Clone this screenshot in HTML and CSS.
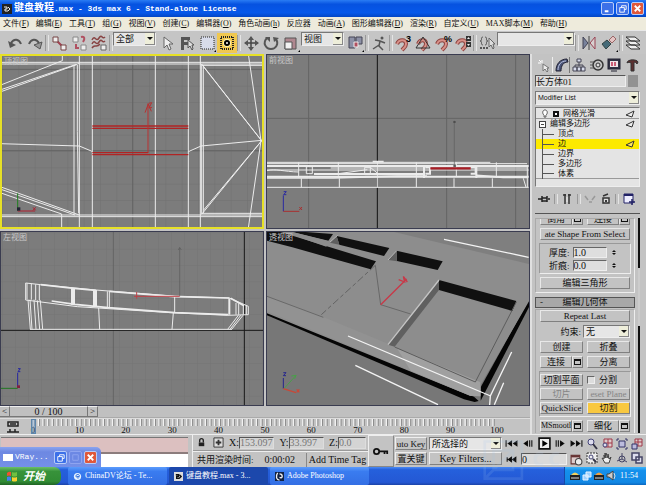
FILE: index.html
```html
<!DOCTYPE html>
<html lang="zh-CN">
<head>
  <meta charset="UTF-8" />
  <title>键盘教程.max - 3ds max 6 - Stand-alone License</title>
  <link rel="stylesheet" href="styles.css">
</head>
<body>

  <!-- Title bar -->
  <header class="title-bar">
    <svg class="app-icon" viewBox="0 0 10 10"><rect width="10" height="10" fill="#222"/><path d="M2 3h3v2H3v2h3M6 3l2 2-2 2" fill="none" stroke="#eee"/></svg>
    <h1><span>键盘教程</span>.max - 3ds max 6 - Stand-alone License</h1>
    <div class="window-buttons">
      <button aria-label="最小化"><svg viewBox="0 0 12 12"><path d="M3 9h4" stroke="#fff" stroke-width="2"/></svg></button>
      <button aria-label="还原"><svg viewBox="0 0 12 12"><path d="M5 5V3h5v4H8M3 5h5v5H3z" fill="none" stroke="#fff"/></svg></button>
      <button class="close" aria-label="关闭"><svg viewBox="0 0 12 12"><path d="M3 3l6 6M9 3l-6 6" stroke="#fff" stroke-width="2"/></svg></button>
    </div>
  </header>

  <!-- Menu -->
  <nav class="menu-bar">
    <a href="#">文件(<u>F</u>)</a>
    <a href="#">编辑(<u>E</u>)</a>
    <a href="#">工具(<u>T</u>)</a>
    <a href="#">组(<u>G</u>)</a>
    <a href="#">视图(<u>V</u>)</a>
    <a href="#">创建(<u>C</u>)</a>
    <a href="#">编辑器(<u>O</u>)</a>
    <a href="#">角色动画(<u>h</u>)</a>
    <a href="#">反应器</a>
    <a href="#">动画(<u>A</u>)</a>
    <a href="#">图形编辑器(<u>D</u>)</a>
    <a href="#">渲染(<u>R</u>)</a>
    <a href="#">自定义(<u>U</u>)</a>
    <a href="#">MAX脚本(<u>M</u>)</a>
    <a href="#">帮助(<u>H</u>)</a>
  </nav>

  <!-- Main toolbar -->
  <div class="toolbar">
    <button aria-label="撤消"><svg viewBox="0 0 20 20"><path d="M6 10C9 5 14 6 16 11" fill="none" stroke="#555" stroke-width="2"/><path d="M3 8l2 7 6-3z" fill="#555"/></svg></button>
    <button aria-label="重做"><svg viewBox="0 0 20 20"><path d="M14 10C11 5 6 6 4 11" fill="none" stroke="#555" stroke-width="2"/><path d="M17 9l-2 7-6-4z" fill="#999" stroke="#555"/></svg></button>
    <span class="sep"></span>
    <button aria-label="选择并链接"><svg viewBox="0 0 20 20"><path d="M7 7l6 6" stroke="#a04050" stroke-width="2"/><path d="M4 4h5v5H4zM12 12h5v5h-5z" fill="#eee" stroke="#744"/></svg></button>
    <button aria-label="断开链接"><svg viewBox="0 0 20 20"><path d="M4 4h5v5H4zM12 12h5v5h-5z" fill="#eee" stroke="#888"/><path d="M7 11v4h3M12 4c4-1 4 2 2 5" fill="none" stroke="#b05060" stroke-width="2"/></svg></button>
    <button aria-label="绑定到空间扭曲"><svg viewBox="0 0 20 20"><path d="M3 7c3-6 4 3 7-2s3 2 6-1M3 11c3-6 4 3 7-2s3 2 6-1M3 15c3-5 4 1 8-4" fill="none" stroke="#844" stroke-width="1.5"/><path d="M12 12h5v5h-5z" fill="#eee" stroke="#666"/></svg></button>
    <span class="sep"></span>
    <label class="combo filter"><select aria-label="选择过滤器"><option>全部</option></select><i></i></label>
    <button aria-label="选择对象"><svg viewBox="0 0 20 20"><path d="M7 4v11l3-3 2 5 2-1-2-5h4z" fill="#eee" stroke="#666"/></svg></button>
    <button aria-label="按名称选择"><svg viewBox="0 0 20 20"><path d="M4 4h9v3H7v2h4v3H7v5H4z" fill="#555"/><path d="M11 7v8l2-2 2 4 1-1-1-4h2z" fill="#ddd" stroke="#555"/></svg></button>
    <button aria-label="选择区域"><svg viewBox="0 0 20 20"><rect x="4" y="4" width="13" height="12" fill="#d8dcea" stroke="#222" stroke-dasharray="1 1"/><path d="M19 17v2h-2z"/></svg></button>
    <button class="active" aria-label="窗口/交叉"><svg viewBox="0 0 20 20"><rect x="4" y="4" width="12" height="12" fill="none" stroke="#222" stroke-width="2" stroke-dasharray="1 1"/><circle cx="10" cy="10" r="4" fill="#fff4b0"/><circle cx="10" cy="10" r="3"/><circle cx="10" cy="10" r="1" fill="#fff"/></svg></button>
    <span class="sep"></span>
    <button aria-label="移动"><svg viewBox="0 0 20 20"><path d="M10 4v13M4 10h13" stroke="#444" stroke-width="1.5"/><path d="M10 3l3 4H7zM10 18l3-4H7zM3 10l4-3v6zM18 10l-4-3v6z" fill="#555"/></svg></button>
    <button aria-label="旋转"><svg viewBox="0 0 20 20"><path d="M6 5c-5 5-1 11 4 11s8-5 5-10" fill="none" stroke="#555" stroke-width="2"/><path d="M4 4h5v5zM12 4l6 1-5 4z" fill="#555"/></svg></button>
    <button aria-label="缩放"><svg viewBox="0 0 20 20"><path d="M4 5h11v11H4z" fill="#b08890" stroke="#555"/><path d="M4 9h7v7H4z" fill="#f2f2f2" stroke="#555"/><path d="M19 17v2h-2z"/></svg></button>
    <label class="combo filter"><select aria-label="参考坐标系"><option>视图</option></select><i></i></label>
    <button aria-label="轴点中心"><svg viewBox="0 0 20 20"><path d="M4 4h6v11H4zM11 4h6v7h-6z" fill="#8d91a6" stroke="#445"/><path d="M9 9h4v5H9z" fill="#b05060" stroke="#eee"/><path d="M19 17v2h-2z"/></svg></button>
    <span class="sep"></span>
    <button aria-label="操纵"><svg viewBox="0 0 20 20"><circle cx="13" cy="5" r="1.5" fill="#555"/><path d="M6 7l5 1 5 2M11 8l-1 5 4 4M10 12l-6 4" fill="none" stroke="#555" stroke-width="1.5"/></svg></button>
    <span class="sep"></span>
    <button aria-label="捕捉"><svg viewBox="0 0 20 20"><path d="M4 11c2-5 9-5 9 0 0 3-2 4-4 6" fill="none" stroke="#8c4440" stroke-width="4"/><path d="M4 11c2-5 9-5 9 0 0 3-2 4-4 6" fill="none" stroke="#d89088" stroke-width="2"/><text x="13" y="9" class="glyph">3</text></svg></button>
    <button aria-label="角度捕捉"><svg viewBox="0 0 20 20"><path d="M5 11c2-5 8-5 8 0 0 3-2 4-4 6" fill="none" stroke="#8c4440" stroke-width="4"/><path d="M5 11c2-5 8-5 8 0 0 3-2 4-4 6" fill="none" stroke="#d89088" stroke-width="2"/><path d="M10 4L3 15h14z" fill="none" stroke="#333"/></svg></button>
    <button aria-label="百分比捕捉"><svg viewBox="0 0 20 20"><path d="M4 11c2-5 9-5 9 0 0 3-2 4-4 6" fill="none" stroke="#8c4440" stroke-width="4"/><path d="M4 11c2-5 9-5 9 0 0 3-2 4-4 6" fill="none" stroke="#d89088" stroke-width="2"/><text x="11" y="9" class="glyph">%</text></svg></button>
    <button aria-label="微调器捕捉"><svg viewBox="0 0 20 20"><path d="M4 11c2-5 9-5 9 0 0 3-2 4-4 6" fill="none" stroke="#8c4440" stroke-width="4"/><path d="M4 11c2-5 9-5 9 0 0 3-2 4-4 6" fill="none" stroke="#d89088" stroke-width="2"/><path d="M13 3h5v5h-5zM13 9h5v5h-5z" fill="#333"/><path d="M14 6h3l-1.500-2zM14 11h3l-1.500 2z" fill="#eee"/></svg></button>
    <span class="sep"></span>
    <button aria-label="命名选择集"><svg viewBox="0 0 20 20"><path d="M6 4c-3 0 0 4-3 4 3 0 0 4 3 4M8 4c3 0 0 4 3 4-3 0 0 4-3 4" fill="none" stroke="#555"/><path d="M12 5v9l2-2 2 4 1-1-1-4h2z" fill="#ddd" stroke="#666"/><path d="M3 15h8" stroke="#555" stroke-width="2" stroke-dasharray="2 1"/></svg></button>
    <label class="combo sets"><select aria-label="命名选择"><option></option></select><i></i></label>
    <span class="sep"></span>
    <button aria-label="镜像"><svg viewBox="0 0 20 20"><path d="M4 4l5 6-5 6z" fill="#78829c" stroke="#445"/><path d="M16 4l-5 6 5 6z" fill="#d8d0d0" stroke="#945"/><path d="M10 3v14" stroke="#444"/></svg></button>
    <button aria-label="对齐"><svg viewBox="0 0 20 20"><path d="M3 11l5-4 4 4-5 5z" fill="#456a78" stroke="#344"/><path d="M10 7l4-4 3 3-4 4z" fill="#e4c4c4" stroke="#966"/><path d="M19 17v2h-2z"/></svg></button>
    <span class="sep"></span>
    <button aria-label="层管理器"><svg viewBox="0 0 20 20"><path d="M3 12h9l5 4H8zM3 8h9l5 4H8zM3 4h9l5 4H8z" fill="#eee" stroke="#333"/></svg></button>
  </div>

  <main class="workspace">
    <section class="left">
      <div class="viewports">

        <!-- Top view -->
        <div class="viewport selected">
          <svg viewBox="6 18 780 513" preserveAspectRatio="none">
            <defs>
              <pattern id="grid-top" x="6" y="9" width="49" height="49" patternUnits="userSpaceOnUse"><path d="M0 1h49M1 0v49" stroke="#717171" stroke-width="2"/></pattern>
            </defs>
            <rect width="800" height="540" fill="url(#grid-top)"/>
            <path class="axis" d="M398 0v540M0 302h800M0 58h800"/>
            <g class="wire">
              <path d="M0 37h790M0 42h230M237 42h549M0 495h790M0 500h786M605 46h184M605 490h184"/>
              <path d="M222 45v446M232 45v200l4 245M238 12v524M277 12v524M466 12v524M565 12v524M601 12v524M605 42v450M610 45v445"/>
              <path d="M187 12v20l-187 74M0 120l238-80M0 126l230-82M0 410l238 85M0 417l225 78M0 428l185 64v44"/>
              <path d="M0 281l238 7 38 16M565 305l38-17 183-17M605 42l180 230M612 52l174 222M745 12l38 260M605 493l181-222M611 480l175-209M745 534l38-262"/>
            </g>
            <path d="M277 228h288M277 235h288M277 308h168M277 314h288" stroke="#b02424" stroke-width="4"/>
            <path d="M444 308V160M435 188l10-26 9 22M446 160l9-2-8 16 9-2" fill="none" stroke="#b83030" stroke-width="3"/>
            <path d="M53 482v-52" stroke="#208020" stroke-width="3"/>
            <path d="M53 483h52M99 472l8 9M107 472l-8 9" stroke="#b02030" stroke-width="3"/>
            <rect x="51" y="472" width="10" height="10" fill="#223"/>
          </svg>
          <span class="view-name">顶视图</span>
        </div>

        <!-- Front view -->
        <div class="viewport">
          <svg viewBox="9 15 786 519" preserveAspectRatio="none">
            <path class="axis" d="M134 0v540M548 0v540M755 0v540M0 205h800"/>
            <path d="M340 0v540" stroke="#111" stroke-width="3"/>
            <g class="wire">
              <path d="M9 337h670M9 341h780M9 412h785M9 360h785M200 354h590"/>
              <path d="M104 337v46M112 385v27M226 385v27M223 337v40M340 333v79M457 337v75M570 385v27M577 337v44M697 337v46M685 385v27M778 385l8 27M790 345v67"/>
              <path d="M127 350v21h18v-21zM302 352v22h17v-22zM319 352l22 18M9 362c25-7 50 3 95 4M223 371l87-12"/>
              <path d="M9 348h785M9 380h785M150 372h330M480 350v34M637 350v34M484 351h14v20h-14M620 351h15v20h-15" stroke-width="6"/>
              <path d="M9 384h200l130-4 60-2h90M638 376l80 6h74M326 335h33" stroke-width="5"/>
            </g>
            <path d="M499 355h121" stroke="#a81c24" stroke-width="7"/>
            <path d="M571 350V212" stroke="#5e5e5e" stroke-width="2"/>
            <path d="M568 216h7M568 348h8" stroke="#444" stroke-width="5"/>
            <path d="M58 484v-48M59 425h8l-8 9h8" fill="none" stroke="#2a2aa0" stroke-width="3"/>
            <path d="M58 484h48M106 471l8 9M114 471l-8 9" stroke="#a83030" stroke-width="3"/>
          </svg>
          <span class="view-name">前视图</span>
        </div>

        <!-- Left view -->
        <div class="viewport">
          <svg viewBox="3 12 786 519" preserveAspectRatio="none">
            <defs>
              <pattern id="grid-left" x="6" y="13" width="39" height="49" patternUnits="userSpaceOnUse"><path d="M0 1h39M1 0v49" stroke="#747474" stroke-width="2"/></pattern>
            </defs>
            <rect width="800" height="540" fill="url(#grid-left)"/>
            <path class="axis" d="M340 0v540"/>
            <path d="M0 307h800M733 0v540" stroke="#181818" stroke-width="3"/>
            <g class="wire">
              <path d="M77 213V165l45 5 165 16 233 18 168 6 57 25v25l-63 2-170-8-280-18-155-20z"/>
              <path d="M81 166v48M94 167v48M107 169v48M118 170v48M322 190v49M328 190v49M524 205v48M708 225v35M716 226v34M730 232v28M739 232v28"/>
              <path d="M84 215l7 89M90 215l6 89M102 215l6 89M112 217l7 87M121 217l7 87H90M296 240l3 64M520 254l-4 50M715 262l-32 42M722 262l-32 42M729 262l-34 42M128 304h568"/>
              <path d="M216 181v49M222 182v48M282 186v49M288 186v49M688 211v49" stroke-width="6"/>
              <path d="M122 170l100 11 66 6M328 190l195 16 165 4M155 219l70 10 100 10 200 15 160 6M692 211l40 22" stroke-width="5"/>
            </g>
            <path d="M539 205V60M535 66l4-8 5 8" fill="none" stroke="#5a5a5a" stroke-width="2"/>
            <path d="M539 205H402M410 192v20" stroke="#c04048" stroke-width="3"/>
            <path d="M53 480v-46M54 422h7l-7 9h7" fill="none" stroke="#2525a0" stroke-width="3"/>
            <path d="M53 481H0" stroke="#207820" stroke-width="3"/>
            <rect x="51" y="472" width="9" height="8" fill="#822040"/>
          </svg>
          <span class="view-name">左视图</span>
        </div>

        <!-- Perspective view -->
        <div class="viewport">
          <svg viewBox="9 12 786 519" preserveAspectRatio="none">
            <rect width="800" height="540" fill="#777"/>
            <path d="M300 0h500v110z" fill="#7f7f7f"/>
            <path d="M9 250L630 506l14 13-12 3-32-8L9 262z" fill="#050505"/>
            <path d="M650 478L795 215v22L650 518z" fill="#050505"/>
            <path d="M0 0h340l455 108v112L650 470l-2 32-28 2L0 252z" fill="#8d8d8d"/>
            <path d="M9 205L180 268l470 195v42l-30-1L9 250z" fill="#929292"/>
            <path d="M400 362l248 100v43l-28-2-180-75z" fill="#a0a0a0"/>
            <path d="M85 12h40l82 6-14 20z" fill="#101010"/>
            <path d="M9 12h40l287 88-16 24L85 58 9 38z" fill="#101010"/>
            <path d="M60 12h25l110 28-8 16z" fill="#8d8d8d"/>
            <path d="M218 24l158 36-16 24-134-34z" fill="#101010"/>
            <path d="M218 24l-20 20 28 6z" fill="#5e5e5e"/>
            <path d="M398 68l138 32-15 26-122-27z" fill="#101010"/>
            <path d="M398 68l-25 28 26 4z" fill="#606060"/>
            <path d="M525 156l232 63-12 30-220-63z" fill="#101010"/>
            <path d="M525 158v28L392 356l-20-6z" fill="#606060"/>
            <path d="M525 156L372 350" stroke="#c4c4c4" stroke-width="4"/>
            <path d="M221 22l-23 20M398 68l-26 28" stroke="#b4b4b4" stroke-width="3"/>
            <path d="M757 222L634 462M392 357l242 105" fill="none" stroke="#5c5c5c" stroke-width="3"/>
            <path d="M9 205L178 268M350 230l90 28M334 112l16 118" fill="none" stroke="#555" stroke-width="2"/>
            <path d="M334 112L172 260" stroke="#4d4d4d" stroke-width="2" stroke-dasharray="22 8 12 8"/>
            <path d="M540 34l254 54M252 324l428 180M274 412l248 118M743 372l-64 132-2 27M719 464l-28 66" fill="none" stroke="#f4f4f4" stroke-width="4"/>
            <path d="M350 230l78-77M404 155l18 7-4-17M418 145l12 17" fill="none" stroke="#c83848" stroke-width="4"/>
            <path d="M58 482v-32M58 434h8l-8 9h8" fill="none" stroke="#26268c" stroke-width="3"/>
            <path d="M60 482l36-40M82 444l14-2-4 10" fill="none" stroke="#48a048" stroke-width="3"/>
            <path d="M58 482l38 12M98 484l8 9M106 484l-8 9" fill="none" stroke="#c84838" stroke-width="4"/>
          </svg>
          <span class="view-name">透视图</span>
        </div>
      </div>

      <!-- Time slider and track bar -->
      <div class="time-slider">
        <button aria-label="上一帧">&lt;</button>
        <button class="thumb">0 / 100</button>
        <button aria-label="下一帧">&gt;</button>
      </div>
      <div class="track-bar">
        <svg class="curve-icon" viewBox="0 0 12 12"><path d="M1 1h10v4H1zM0 11h12M3 8v3M8 8v3M3 3h6" fill="none" stroke="#222" stroke-width="1.500"/></svg>
        <div class="ruler">
          <svg class="ticks" viewBox="0 0 1000 8" preserveAspectRatio="none"><path d="M0 4h1002" stroke="#f2f2f2" stroke-width="8" stroke-dasharray="3 7"/><path d="M3 4h1000" stroke="#888" stroke-width="8" stroke-dasharray="2 8"/></svg>
          <div class="numbers">
            <span>0</span><span>10</span><span>20</span><span>30</span><span>40</span><span>50</span><span>60</span><span>70</span><span>80</span><span>90</span><span>100</span>
          </div>
          <span class="playhead"></span>
        </div>
      </div>
    </section>

    <!-- Command panel -->
    <aside class="panel">
      <div class="tabs">
        <button aria-label="创建"><svg viewBox="0 0 14 14"><path d="M6 6v7l2-2 2 3 1-1-1-3h2z" fill="#eee" stroke="#777"/><path d="M5 2v3M1 5h3M2 2l2 2" stroke="#fff"/></svg></button>
        <button class="current" aria-label="修改"><svg viewBox="0 0 14 14"><path d="M1 13C1 6 5 1 12 1l1 3C8 4 6 8 6 13z" fill="#4a5478" stroke="#223"/><path d="M3 12c0-5 3-9 8-9" fill="none" stroke="#bcc4e0"/></svg></button>
        <button aria-label="层次"><svg viewBox="0 0 14 14"><path d="M7 4v4M3 10V7h8v3" fill="none" stroke="#445"/><path d="M5 1h4v3H5zM1 9h4v4H1zM5 9h4v4H5zM9 9h4v4H9z" fill="#d8dcec" stroke="#445"/></svg></button>
        <button aria-label="运动"><svg viewBox="0 0 14 14"><circle cx="8" cy="7" r="5" fill="none" stroke="#333" stroke-width="1.500"/><circle cx="8" cy="7" r="2" fill="#ddd" stroke="#333"/><path d="M0 4h4M0 7h3M0 10h4" stroke="#555"/></svg></button>
        <button aria-label="显示"><svg viewBox="0 0 14 14"><rect x="1" y="1" width="12" height="10" fill="#334" stroke="#223"/><rect x="3" y="3" width="8" height="6" fill="#f0e4e8"/><path d="M5 4v4M8 4v4" stroke="#c03050" stroke-width="1.500"/><path d="M4 13h6" stroke="#223"/></svg></button>
        <button aria-label="工具"><svg viewBox="0 0 14 14"><path d="M2 5c0-4 10-4 11-1l-1 2c-1-2-3-2-3-1v8H6V5C5 4 3 4 2 5z" fill="#5c3030" stroke="#333"/></svg></button>
      </div>

      <div class="object-name">
        <input type="text" aria-label="对象名称" value="长方体01" />
        <span class="swatch"></span>
      </div>
      <label class="combo modifier"><select aria-label="Modifier List"><option>Modifier List</option></select><i></i></label>

      <ul class="stack">
        <li class="top"><svg viewBox="0 0 8 10"><path d="M3 7C0 4 2 1 4 1s4 3 1 6v2H3z" fill="#fff" stroke="#444"/></svg><b class="plus"></b><span>网格光滑</span><svg class="tri" viewBox="0 0 10 8"><path d="M1 5l8-4-2 6z" fill="#eee" stroke="#333"/></svg></li>
        <li class="base"><b class="minus"></b><span>编辑多边形</span><svg class="tri" viewBox="0 0 10 8"><path d="M1 5l8-4-2 6z" fill="#eee" stroke="#333"/></svg></li>
        <li class="sub"><span>顶点</span></li>
        <li class="sub picked"><span>边</span><svg class="tri" viewBox="0 0 10 8"><path d="M1 5l8-4-2 6z" fill="#ffe860" stroke="#333"/></svg></li>
        <li class="sub"><span>边界</span></li>
        <li class="sub"><span>多边形</span></li>
        <li class="sub last"><span>体素</span></li>
      </ul>

      <div class="stack-tools">
        <button aria-label="锁定堆栈"><svg viewBox="0 0 12 12"><path d="M0 6h4M4 3v6M4 5h5v3H4M9 3v6M10 6h2" fill="none" stroke="#222" stroke-width="1.500"/></svg></button>
        <span class="sep"></span>
        <button aria-label="显示最终结果"><svg viewBox="0 0 12 12"><path d="M4 1v10M8 1v10M2 2h3M7 2h3" stroke="#333" stroke-width="1.500"/><path d="M6 4v5" stroke="#eee"/></svg></button>
        <span class="sep"></span>
        <button aria-label="使唯一"><svg viewBox="0 0 12 12"><path d="M1 3l3 4M11 3L8 7M5 9h3" stroke="#999" stroke-width="1.500"/></svg></button>
        <button aria-label="移除修改器"><svg viewBox="0 0 12 12"><path d="M3 5h6v5H3z" fill="#ddd" stroke="#333" stroke-width="1.500"/><path d="M3 3l5-2" stroke="#333" stroke-width="1.500"/><circle cx="6" cy="8" r="1"/></svg></button>
        <span class="sep"></span>
        <button aria-label="配置修改器集"><svg viewBox="0 0 12 12"><path d="M1 1h9v9H1z" fill="#eef" stroke="#226"/><path d="M1 2h9" stroke="#226" stroke-width="2"/><path d="M6 9h6M9 6v6" stroke="#226" stroke-width="1.500"/></svg></button>
      </div>

      <div class="rollouts">
        <div class="rollout-body">
          <div class="pair cut">
            <div class="with-box"><button>倒角</button><button aria-label="倒角设置"><b></b></button></div>
            <div class="with-box"><button>连接</button><button aria-label="连接设置"><b></b></button></div>
          </div>
          <button class="latin">ate Shape From Select</button>
          <fieldset class="group">
            <label class="spin">厚度:<input type="text" value="1.0" /><i></i></label>
            <label class="spin">折痕:<input type="text" value="0.0" /><i></i></label>
          </fieldset>
          <button>编辑三角形</button>
        </div>

        <button class="rollout-head"><span>-</span>编辑几何体</button>
        <div class="rollout-body geometry">
          <button class="latin">Repeat Last</button>
          <div class="constraint">
            <label for="constraint">约束:</label>
            <span class="combo"><select id="constraint"><option>无</option></select><i></i></span>
          </div>
          <div class="pair"><button>创建</button><button>折叠</button></div>
          <div class="pair">
            <div class="with-box"><button>连接</button><button aria-label="连接设置"><b></b></button></div>
            <button>分离</button>
          </div>
          <fieldset class="group slices">
            <div class="pair"><button>切割平面</button><label class="tick"><input type="checkbox" />分割</label></div>
            <div class="pair"><button disabled>切片</button><button class="latin" disabled>eset Plane</button></div>
            <div class="pair"><button class="latin">QuickSlice</button><button class="on">切割</button></div>
          </fieldset>
          <div class="pair">
            <div class="with-box"><button class="latin">MSmooth</button><button aria-label="MSmooth设置"><b></b></button></div>
            <div class="with-box"><button>细化</button><button aria-label="细化设置"><b></b></button></div>
          </div>
        </div>
        <span class="scroll-mark"></span>
      </div>
    </aside>
  </main>

  <!-- Status bar -->
  <footer class="status">
    <div class="listener">
      <div class="macro"></div>
      <div class="output"></div>
      <div class="vray">
        <span class="vray-icon"></span>
        <span class="vray-name">VRay...</span>
        <button aria-label="还原"><svg viewBox="0 0 12 12"><path d="M5 5V3h5v4H8M3 5h5v5H3z" fill="none" stroke="#fff"/></svg></button>
        <button class="dim" aria-label="最大化"><svg viewBox="0 0 12 12"><path d="M3 3h6v6H3z" fill="none" stroke="#8ea4f0"/></svg></button>
        <button class="close" aria-label="关闭"><svg viewBox="0 0 12 12"><path d="M3 3l6 6M9 3l-6 6" stroke="#fff" stroke-width="2"/></svg></button>
      </div>
    </div>

    <div class="readout">
      <div class="coords">
        <button aria-label="锁定选择"><svg viewBox="0 0 12 12"><path d="M4 6V4c0-3 4-3 4 0v2" fill="none" stroke="#222" stroke-width="1.500"/><rect x="3" y="6" width="6" height="4" fill="#222"/></svg></button>
        <button aria-label="绝对模式"><svg viewBox="0 0 12 12"><path d="M1 1h10v10H1z" fill="#ddd" stroke="#333"/><path d="M6 3v6M3 6h6" stroke="#333" stroke-width="2"/></svg></button>
        <label>X:<input type="text" value="153.097" /></label>
        <label>Y:<input type="text" value="33.997" /></label>
        <label>Z:<input type="text" value="0.0" /></label>
      </div>
      <div class="prompt">
        <span>共用渲染时间:</span>
        <span class="latin">0:00:02</span>
        <button class="latin">Add Time Tag</button>
      </div>
    </div>

    <button class="key-button" aria-label="设置关键点"><svg viewBox="0 0 18 10"><circle cx="4" cy="5" r="3" fill="none" stroke="#111" stroke-width="2"/><path d="M7 5h10M13 5v3M16 5v3" stroke="#111" stroke-width="2"/></svg></button>

    <div class="keys">
      <button>uto Key</button>
      <label class="combo"><select aria-label="关键点选择集"><option>所选择的</option></select><i></i></label>
      <button>置关键</button>
      <button class="latin">Key Filters...</button>
    </div>

    <div class="playback">
      <div class="play-row">
        <button aria-label="转至开头"><svg viewBox="0 0 12 12"><path d="M1 3v6M6 4v4L3 6zM11 4v4L8 6z" stroke="#111"/></svg></button>
        <button aria-label="上一帧"><svg viewBox="0 0 12 12"><path d="M6 4v4L3 6zM8 3v6M10 3v6" stroke="#111"/></svg></button>
        <button aria-label="播放"><svg viewBox="0 0 12 12"><path d="M1 1h10v10H1z" fill="#eee" stroke="#111" stroke-width="1.500"/><path d="M4 3v6l5-3z"/></svg></button>
        <button aria-label="下一帧"><svg viewBox="0 0 12 12"><path d="M6 4v4l3-2zM2 3v6M4 3v6" stroke="#111"/></svg></button>
        <button aria-label="转至结尾"><svg viewBox="0 0 12 12"><path d="M1 4v4l3-2zM6 4v4l3-2zM11 3v6" stroke="#111"/></svg></button>
      </div>
      <div class="play-row">
        <button aria-label="关键点模式"><svg viewBox="0 0 12 12"><path d="M2 4v4M6 4v4L3 6zM10 4v4L7 6z" stroke="#111"/></svg></button>
        <input type="text" aria-label="当前帧" value="0" />
        <button aria-label="时间配置"><svg viewBox="0 0 12 12"><path d="M1 2h8v8H1z" fill="#dcc" stroke="#633"/><path d="M1 3h8" stroke="#633" stroke-width="2"/><circle cx="8" cy="8" r="3" fill="#eee" stroke="#444"/></svg></button>
      </div>
    </div>

    <div class="nav-tools">
      <button aria-label="缩放"><svg viewBox="0 0 12 12"><circle cx="5" cy="4" r="3" fill="#dde" stroke="#447"/><path d="M7 6l4 5" stroke="#334" stroke-width="2"/></svg></button>
      <button aria-label="缩放所有视图"><svg viewBox="0 0 12 12"><path d="M3 1h8v8H3zM7 1v8M3 5h8" fill="#dcc" stroke="#a03848"/><circle cx="4" cy="7" r="2" fill="#dde" stroke="#447"/></svg></button>
      <button aria-label="最大化显示"><svg viewBox="0 0 12 12"><path d="M3 3h6v6H3z" fill="#bbd" stroke="#336"/><path d="M1 3V1h2M9 1h2v2M1 9v2h2M9 11h2V9" fill="none" stroke="#336"/></svg></button>
      <button aria-label="所有视图最大化显示"><svg viewBox="0 0 12 12"><path d="M4 1h7v7H4zM7 1v7M4 4h7" fill="#dcc" stroke="#a03848"/><path d="M1 6h5v5H1z" fill="#bbd" stroke="#336"/></svg></button>
      <button aria-label="缩放区域"><svg viewBox="0 0 12 12"><path d="M1 1h10v10H1z" fill="#eee" stroke="#333" stroke-dasharray="2 1"/><circle cx="5" cy="5" r="2" fill="none" stroke="#447"/><path d="M7 7l3 3" stroke="#334" stroke-width="2"/></svg></button>
      <button aria-label="平移"><svg viewBox="0 0 12 12"><path d="M4 11L1 6l2 1V3l1 3V1l1 5V1l2 5V2l1 5 2-2-2 6z" fill="#eee" stroke="#444"/></svg></button>
      <button aria-label="弧形旋转"><svg viewBox="0 0 12 12"><circle cx="6" cy="7" r="3" fill="none" stroke="#446"/><path d="M6 1v6l5 3M6 7l-5 2" fill="none" stroke="#446"/></svg></button>
      <button aria-label="最大化视口"><svg viewBox="0 0 12 12"><path d="M1 1h7v7H1zM5 5h6v6H5z" fill="#dde" stroke="#446" stroke-width="1.500"/></svg></button>
    </div>

    <!-- Faint stamp over the playback controls -->
    <svg class="stamp" viewBox="0 0 90 52" aria-hidden="true"><path d="M4 4h42v42H4zM14 14h22v22H14zM4 46l32-32" fill="none" stroke="#9fc4ee" stroke-width="3"/><path d="M70 18c-12-4-12 16 0 12M88 18c-12-4-12 16 0 12" fill="none" stroke="#b8d0ec" stroke-width="4"/></svg>
  </footer>

  <!-- Windows taskbar -->
  <div class="taskbar">
    <button class="start"><svg viewBox="0 0 12 12"><path d="M1 3q2-2 4-1v4q-2-1-4 0z" fill="#f05030"/><path d="M6 2q2 1 5 0v4q-3 1-5 0z" fill="#70c040"/><path d="M1 7q2-1 4 0v4q-2-1-4 0z" fill="#4080f0"/><path d="M6 7q2 1 5 0v4q-3 1-5 0z" fill="#f8d030"/></svg>开始</button>
    <button class="task"><svg viewBox="0 0 10 10"><circle cx="5" cy="5" r="4" fill="#e8f4ff"/><path d="M3 5c0-3 5-3 4 0H4c0 2 2 2 3 1" fill="none" stroke="#2868d8"/></svg>ChinaDV论坛 - Te...</button>
    <button class="task pressed"><svg viewBox="0 0 10 10"><rect width="10" height="10" fill="#ddd"/><path d="M2 3h3v2H3v2h3M6 3l2 2-2 2" fill="none" stroke="#111" stroke-width="1.500"/></svg>键盘教程.max - 3...</button>
    <button class="task"><svg viewBox="0 0 10 10"><rect width="10" height="10" fill="#124"/><path d="M3 1c-3 4-1 8 2 8M5 2c4 0 4 6 0 4" fill="none" stroke="#eee" stroke-width="1.500"/></svg>Adobe Photoshop</button>
    <div class="tray">
      <svg viewBox="0 0 10 10"><path d="M1 4q4-5 8 0z" fill="#f0d060"/><rect y="4" width="10" height="5" fill="#222"/><path d="M1 7h8" stroke="#ddd"/></svg>
      <svg viewBox="0 0 10 10"><path d="M4 1h5v5H4zM1 4h5v5H1z" fill="#9cd0ff" stroke="#e8f4ff"/></svg>
      <svg viewBox="0 0 10 10"><path d="M1 4q4-5 8 0z" fill="#f0a040"/><rect y="4" width="10" height="5" fill="#222"/><path d="M1 7h8" stroke="#ddd"/></svg>
      <svg viewBox="0 0 10 10"><path d="M1 3h2l4-3v9L3 6H1z" fill="#ccc" stroke="#444"/><path d="M8 2q2 3 0 6" fill="none" stroke="#ddd"/></svg>
      <time>11:54</time>
    </div>
  </div>

</body>
</html>
```
FILE: styles.css
```css
* {
  box-sizing: border-box;
}

body {
  background-color: #c3c3c3;
  color: #111;
  font-family: 'Liberation Serif', 'Noto Sans CJK SC', serif;
  font-size: 9px;
  line-height: 10px;
  margin: 0;
  height: 100vh;
  display: flex;
  flex-direction: column;
  overflow: hidden;
}

button,
input,
select {
  font: inherit;
  color: inherit;
  margin: 0;
  padding: 0;
  border-radius: 0;
  min-width: 0;
}

button {
  background: none;
  border: none;
  overflow: hidden;
  white-space: nowrap;
}

svg {
  display: block;
}

.latin {
  font-size: 10px;
}

/* Title bar */
.title-bar {
  flex: none;
  height: 17px;
  padding: 0 2px;
  display: flex;
  align-items: center;
  gap: 2px;
  background: linear-gradient(#2a7cf4, #0652e0 25%, #0658ea 75%, #0346c4);
  color: white;
}

.title-bar h1 {
  flex: 1;
  margin: 0;
  font-family: 'Liberation Mono', 'Noto Sans CJK SC', monospace;
  font-size: 8px;
  font-weight: bold;
}

.title-bar h1 span {
  font-size: 10px;
}

.app-icon {
  width: 10px;
  height: 10px;
}

.window-buttons {
  display: flex;
  gap: 2px;
}

.window-buttons button,
.vray button {
  width: 13px;
  height: 13px;
  border: 1px solid #b8ccf8;
  border-radius: 2px;
  background-color: #3c70e8;
}

.window-buttons .close,
.vray .close {
  background-color: #e0583a;
}

/* Menu */
.menu-bar {
  flex: none;
  height: 13px;
  padding: 0 3px;
  display: flex;
  align-items: center;
  gap: 7px;
  background-color: #eeebdc;
  font-size: 8px;
  white-space: nowrap;
}

.menu-bar a {
  color: #111;
  text-decoration: none;
}

/* Toolbar */
.toolbar {
  flex: none;
  height: 24px;
  padding: 0 3px 0 5px;
  display: flex;
  align-items: center;
  background-color: #c5c5c5;
  border-top: 1px solid #e8e8e8;
}

.toolbar button {
  flex: 0 0 20px;
  height: 20px;
}

.toolbar .active {
  background-color: #f0c850;
}

.sep {
  flex: 0 0 4px;
  height: 16px;
  border-left: 1px solid #999;
  border-right: 1px solid #e4e4e4;
  width: 4px;
}

.glyph {
  font-family: 'Liberation Sans', sans-serif;
  font-size: 9px;
  font-weight: bold;
}

.combo {
  display: flex;
  height: 13px;
  border: 1px solid;
  border-color: #777 #eee #eee #777;
  background-color: #e6e6e6;
}

.combo select {
  flex: 1;
  appearance: none;
  border: none;
  background: none;
  padding-left: 2px;
}

.combo i {
  width: 10px;
  display: flex;
  align-items: center;
  justify-content: center;
  background-color: #eeeeda;
  border-right: 1px solid #888;
  border-bottom: 1px solid #888;
}

.combo i::after {
  content: "";
  border: 3px solid transparent;
  border-top-color: #111;
  border-bottom: none;
}

.filter {
  flex: 0 0 43px;
  margin-right: 1px;
}

.sets {
  flex: 1;
}

.filter,
.sets {
  align-self: flex-start;
  height: 14px;
  margin-top: 1px;
}

/* Workspace */
.workspace {
  flex: 1;
  display: flex;
  min-height: 0;
}

.left {
  flex: 1;
  display: flex;
  flex-direction: column;
  min-width: 0;
}

.viewports {
  flex: 1;
  display: grid;
  grid-template-columns: 1fr 1fr;
  grid-template-rows: 1fr 1fr;
  gap: 2px;
  min-height: 0;
}

.viewport {
  position: relative;
  min-height: 0;
  background-color: #7c7c7c;
  border: 1px solid #3a3c50;
}

.viewport.selected {
  border: 2px solid #e6e026;
}

.viewport svg {
  width: 100%;
  height: 100%;
  position: absolute;
}

.view-name {
  position: absolute;
  left: 2px;
  top: 1px;
  font-size: 8px;
  color: #c8c8c8;
}

.wire {
  fill: none;
  stroke: #ececec;
  stroke-width: 3px;
}

.axis {
  fill: none;
  stroke: #646464;
  stroke-width: 3px;
}

.time-slider {
  height: 12px;
  display: flex;
  background-color: #c0c0c0;
  border-bottom: 1px solid #aaa;
}

.time-slider button {
  width: 10px;
  border-right: 1px solid #777;
  border-bottom: 1px solid #777;
  border-top: 1px solid #eee;
  line-height: 9px;
}

.time-slider .thumb {
  width: 78px;
  font-size: 10px;
}

.track-bar {
  height: 16px;
  display: flex;
  align-items: center;
  padding: 0 33px 0 7px;
  border-top: 1px solid #ddd;
}

.curve-icon {
  width: 12px;
  height: 12px;
  margin-right: 14px;
}

.ruler {
  flex: 1;
  position: relative;
  align-self: stretch;
}

.ticks {
  width: 100%;
  height: 7px;
}

.numbers {
  display: flex;
  justify-content: space-between;
  font-size: 9px;
  line-height: 8px;
}

.numbers span {
  width: 0;
  display: flex;
  justify-content: center;
}

.playhead {
  position: absolute;
  left: -2px;
  top: 0;
  width: 5px;
  height: 15px;
  background-color: rgba(90, 140, 190, 0.4);
  border: 1px solid #5c86ac;
}

/* Command panel */
.panel {
  flex: 0 0 116px;
  display: flex;
  flex-direction: column;
  padding: 3px 6px 1px 3px;
  border-left: 2px solid #e0e0e0;
  overflow: hidden;
}

.tabs {
  display: flex;
  justify-content: space-between;
  height: 16px;
}

.tabs button {
  width: 18px;
  padding: 1px 2px;
}

.tabs .current {
  border-left: 1px solid #eee;
  border-right: 1px solid #777;
}

.tabs svg {
  width: 14px;
  height: 14px;
}

.object-name {
  display: flex;
  gap: 2px;
  margin-top: 2px;
}

.object-name input {
  flex: 1;
  height: 12px;
  border: 1px solid;
  border-color: #555 #eee #eee #555;
  background-color: #dcdcdc;
}

.swatch {
  width: 10px;
  background-color: #929292;
  margin-right: 2px;
}

.modifier {
  flex: none;
  height: 14px;
  margin-top: 4px;
  font-family: 'Liberation Sans', sans-serif;
  font-size: 7px;
}

.stack {
  list-style: none;
  margin: 2px 0 0;
  padding: 1px 0 7px;
  background-color: #e4e4e4;
  border: 1px solid;
  border-color: #777 #eee #eee #777;
}

.stack li {
  height: 10px;
  display: flex;
  align-items: center;
  gap: 4px;
  padding: 0 4px 0 5px;
  font-size: 8px;
}

.stack li svg {
  width: 8px;
  height: 9px;
}

.stack li .tri {
  width: 10px;
  height: 8px;
  margin-left: auto;
}

.stack .top {
  border-bottom: 1px solid #999;
}

.plus {
  width: 6px;
  height: 6px;
  border: 2px solid #111;
  background-color: #fff;
}

.minus {
  width: 7px;
  height: 7px;
  border: 1px solid #444;
  background: linear-gradient(#444, #444) center / 3px 1px no-repeat #fff;
}

.stack .base {
  padding-left: 3px;
}

.stack .sub {
  padding-left: 6px;
}

.stack .sub::before {
  content: "";
  width: 11px;
  height: 10px;
  border-left: 1px solid #555;
  background: linear-gradient(#555, #555) center / 100% 1px no-repeat;
}

.stack .picked {
  background-color: #fcea00;
}

.stack .last {
  border-bottom: 1px solid #999;
}

.stack-tools {
  display: flex;
  align-items: center;
  justify-content: space-between;
  height: 17px;
  margin-top: 3px;
  padding: 0 5px 0 3px;
}

.stack-tools button,
.stack-tools svg {
  width: 12px;
  height: 12px;
}

.stack-tools .sep {
  height: 10px;
}

.rollouts {
  position: relative;
  flex: 1;
  min-height: 0;
  margin-top: 6px;
  padding-right: 5px;
  overflow: hidden;
  border-top: 1px solid #555;
}

.rollouts .latin {
  font-size: 9px;
}

.scroll-mark {
  position: absolute;
  right: 0;
  top: 4px;
  bottom: 0;
  width: 2px;
  background: linear-gradient(#111 50px, #ccc 50px, #ccc 108px, #111 108px);
}

.rollout-body {
  display: flex;
  flex-direction: column;
  gap: 3px;
  margin: 4px 0 4px;
  padding: 0 4px 3px;
  border: 1px solid;
  border-color: #aaa #eee #eee #aaa;
}

.rollout-body button {
  height: 12px;
  border: 1px solid;
  border-color: #e8e8e8 #808080 #808080 #e8e8e8;
  line-height: 10px;
}

.rollout-body button:disabled {
  color: #858585;
}

.rollout-body .on {
  background-color: #f8c840;
}

.rollout-head {
  width: 100%;
  height: 11px;
  position: relative;
  display: block;
  border: 1px solid #555;
  background-color: #a8a8a8;
  line-height: 9px;
}

.rollout-head span {
  position: absolute;
  left: 4px;
}

.geometry {
  margin: 1px 0 0;
  padding-bottom: 1px;
}

.pair {
  display: grid;
  grid-template-columns: minmax(0, 1fr) minmax(0, 1fr);
  gap: 4px;
}

.cut {
  height: 6px;
  align-content: end;
  overflow: hidden;
}

.with-box {
  display: flex;
}

.with-box button:first-child {
  flex: 1;
}

.rollouts .with-box .latin {
  font-size: 8px;
}

.with-box button:last-child {
  width: 11px;
  display: flex;
  align-items: center;
  justify-content: center;
}

.with-box b {
  width: 7px;
  height: 6px;
  border: 1px solid #111;
  border-top-width: 2px;
}

.group {
  margin: 0 -1px;
  min-width: 0;
  padding: 3px 0 2px;
  border: 1px solid;
  border-color: #999 #eee #eee #999;
  display: flex;
  flex-direction: column;
  gap: 2px;
}

.spin {
  display: flex;
  align-items: center;
  padding-left: 9px;
  gap: 3px;
  white-space: nowrap;
}

.spin input {
  width: 36px;
  height: 11px;
  margin-left: auto;
  border: 1px solid;
  border-color: #666 #eee #eee #666;
  background-color: #dedede;
  font-size: 10px;
}

.spin i {
  width: 8px;
  margin-right: 12px;
}

.spin i::before,
.spin i::after {
  content: "";
  display: block;
  width: 0;
  margin: 1px auto;
  border: 2px solid transparent;
}

.spin i::before {
  border-bottom-color: #111;
  border-top: none;
}

.spin i::after {
  border-top-color: #111;
  border-bottom: none;
}

.constraint {
  display: flex;
  align-items: center;
  justify-content: flex-end;
  gap: 2px;
}

.constraint .combo {
  width: 47px;
}

.slices {
  padding: 2px 0;
}

.tick {
  display: flex;
  align-items: center;
  gap: 4px;
}

.tick input {
  appearance: none;
  width: 8px;
  height: 8px;
  border: 1px solid;
  border-color: #666 #eee #eee #666;
  background-color: #ddd;
}

/* Status bar */
.status {
  position: relative;
  flex: none;
  height: 33px;
  display: flex;
  align-items: stretch;
  border-top: 1px solid #eee;
  background-color: #c3c3c3;
}

.listener {
  position: relative;
  flex: 0 1 188px;
  display: flex;
  flex-direction: column;
  padding: 2px 0 0 1px;
  margin-right: 4px;
}

.macro {
  flex: 1;
  background-color: #dcc0c0;
  border-top: 1px solid #777;
  border-bottom: 2px solid #8c7c7c;
}

.output {
  flex: 1;
  background-color: white;
}

.vray {
  position: absolute;
  left: 0;
  bottom: 0;
  width: 101px;
  height: 20px;
  display: flex;
  align-items: center;
  gap: 2px;
  padding: 0 4px 0 3px;
  border-radius: 0 5px 0 0;
  background: linear-gradient(#8ba4f0, #6d88e2 25%, #7590e8);
  color: white;
}

.vray .dim {
  border-color: #8ea4f0;
  background-color: #6c88e4;
}

.vray-icon {
  width: 10px;
  height: 7px;
  background-color: white;
}

.vray-name {
  flex: 1;
  font-family: 'Liberation Mono', monospace;
  font-size: 8px;
}

.readout {
  flex: 0 1 176px;
  min-width: 0;
  display: flex;
  flex-direction: column;
  border-left: 1px solid #eee;
}

.coords,
.prompt {
  flex: 1;
  display: flex;
  align-items: center;
  justify-content: space-between;
  white-space: nowrap;
}

.coords {
  padding: 0 2px 0 3px;
  border-bottom: 1px solid #999;
}

.coords svg {
  width: 11px;
  height: 11px;
}

.coords label {
  display: flex;
  align-items: center;
  font-size: 10px;
}

.coords input {
  width: 35px;
  height: 12px;
  border: 1px solid;
  border-color: #555 #ddd #ddd #555;
  background-color: #d4d4d4;
  color: #777;
}

.coords label:last-child input {
  width: 28px;
}

.prompt {
  padding-left: 4px;
  border-top: 1px solid #eee;
}

.prompt button {
  width: 62px;
  height: 14px;
  border-left: 1px solid #888;
}

.key-button {
  flex: 0 0 26px;
  padding: 0 4px;
  border: 1px solid;
  border-color: #eee #888 #888 #eee;
}

.keys {
  display: grid;
  grid-template-columns: 32px 73px;
  grid-template-rows: 13px 13px;
  align-content: center;
  gap: 2px;
  margin-left: 1px;
}

.keys button {
  border: 1px solid;
  border-color: #eee #808080 #808080 #eee;
}

.playback {
  flex: 0 0 78px;
  min-width: 0;
  display: flex;
  flex-direction: column;
  justify-content: space-around;
  margin-left: 3px;
}

.play-row {
  display: flex;
  align-items: center;
  justify-content: space-between;
  gap: 3px;
}

.play-row button,
.play-row svg {
  width: 13px;
  height: 13px;
}

.play-row input {
  flex: 1;
  width: 0;
  height: 12px;
  border: 1px solid;
  border-color: #555 #eee #eee #555;
  background-color: #dadada;
  font-size: 10px;
}

.nav-tools {
  display: grid;
  grid-template-columns: repeat(4, 12px);
  gap: 2px 3px;
  align-content: center;
  margin-left: auto;
  padding-right: 3px;
}

.nav-tools svg {
  width: 12px;
  height: 12px;
}

.stamp {
  position: absolute;
  right: 80px;
  top: 3px;
  width: 90px;
  height: 46px;
  opacity: 0.15;
  pointer-events: none;
  z-index: 1;
}

/* Taskbar */
.taskbar {
  flex: none;
  height: 18px;
  display: flex;
  align-items: stretch;
  gap: 2px;
  background: linear-gradient(#4a8af4, #2560dc 15%, #2458d4 85%, #1c44a8);
  color: white;
  font-size: 8px;
}

.start {
  width: 61px;
  margin-right: 5px;
  padding-left: 6px;
  display: flex;
  align-items: center;
  gap: 5px;
  border-radius: 0 7px 7px 0;
  background: linear-gradient(#6cc068, #37923a 25%, #318c34 80%, #206424);
  font-size: 11px;
  font-style: italic;
  font-weight: bold;
}

.start svg {
  width: 12px;
  height: 12px;
}

.task {
  flex: 0 1 99px;
  display: flex;
  align-items: center;
  gap: 3px;
  padding: 0 5px;
  border-radius: 2px;
  background: linear-gradient(#5c9cfc, #3a7cf0 25%, #346fe4);
}

.task.pressed {
  background: #1c48ac;
}

.task svg {
  flex: none;
  width: 9px;
  height: 9px;
}

.tray {
  flex: 0 0 82px;
  margin-left: auto;
  padding: 0 8px 0 5px;
  display: flex;
  align-items: center;
  gap: 2px;
  border-left: 1px solid #1848a8;
  background: linear-gradient(#3cb4fa, #1490ec 20%, #1288e4 85%, #0c68c0);
}

.tray svg {
  width: 10px;
  height: 10px;
}

.tray time {
  margin-left: auto;
}
```
